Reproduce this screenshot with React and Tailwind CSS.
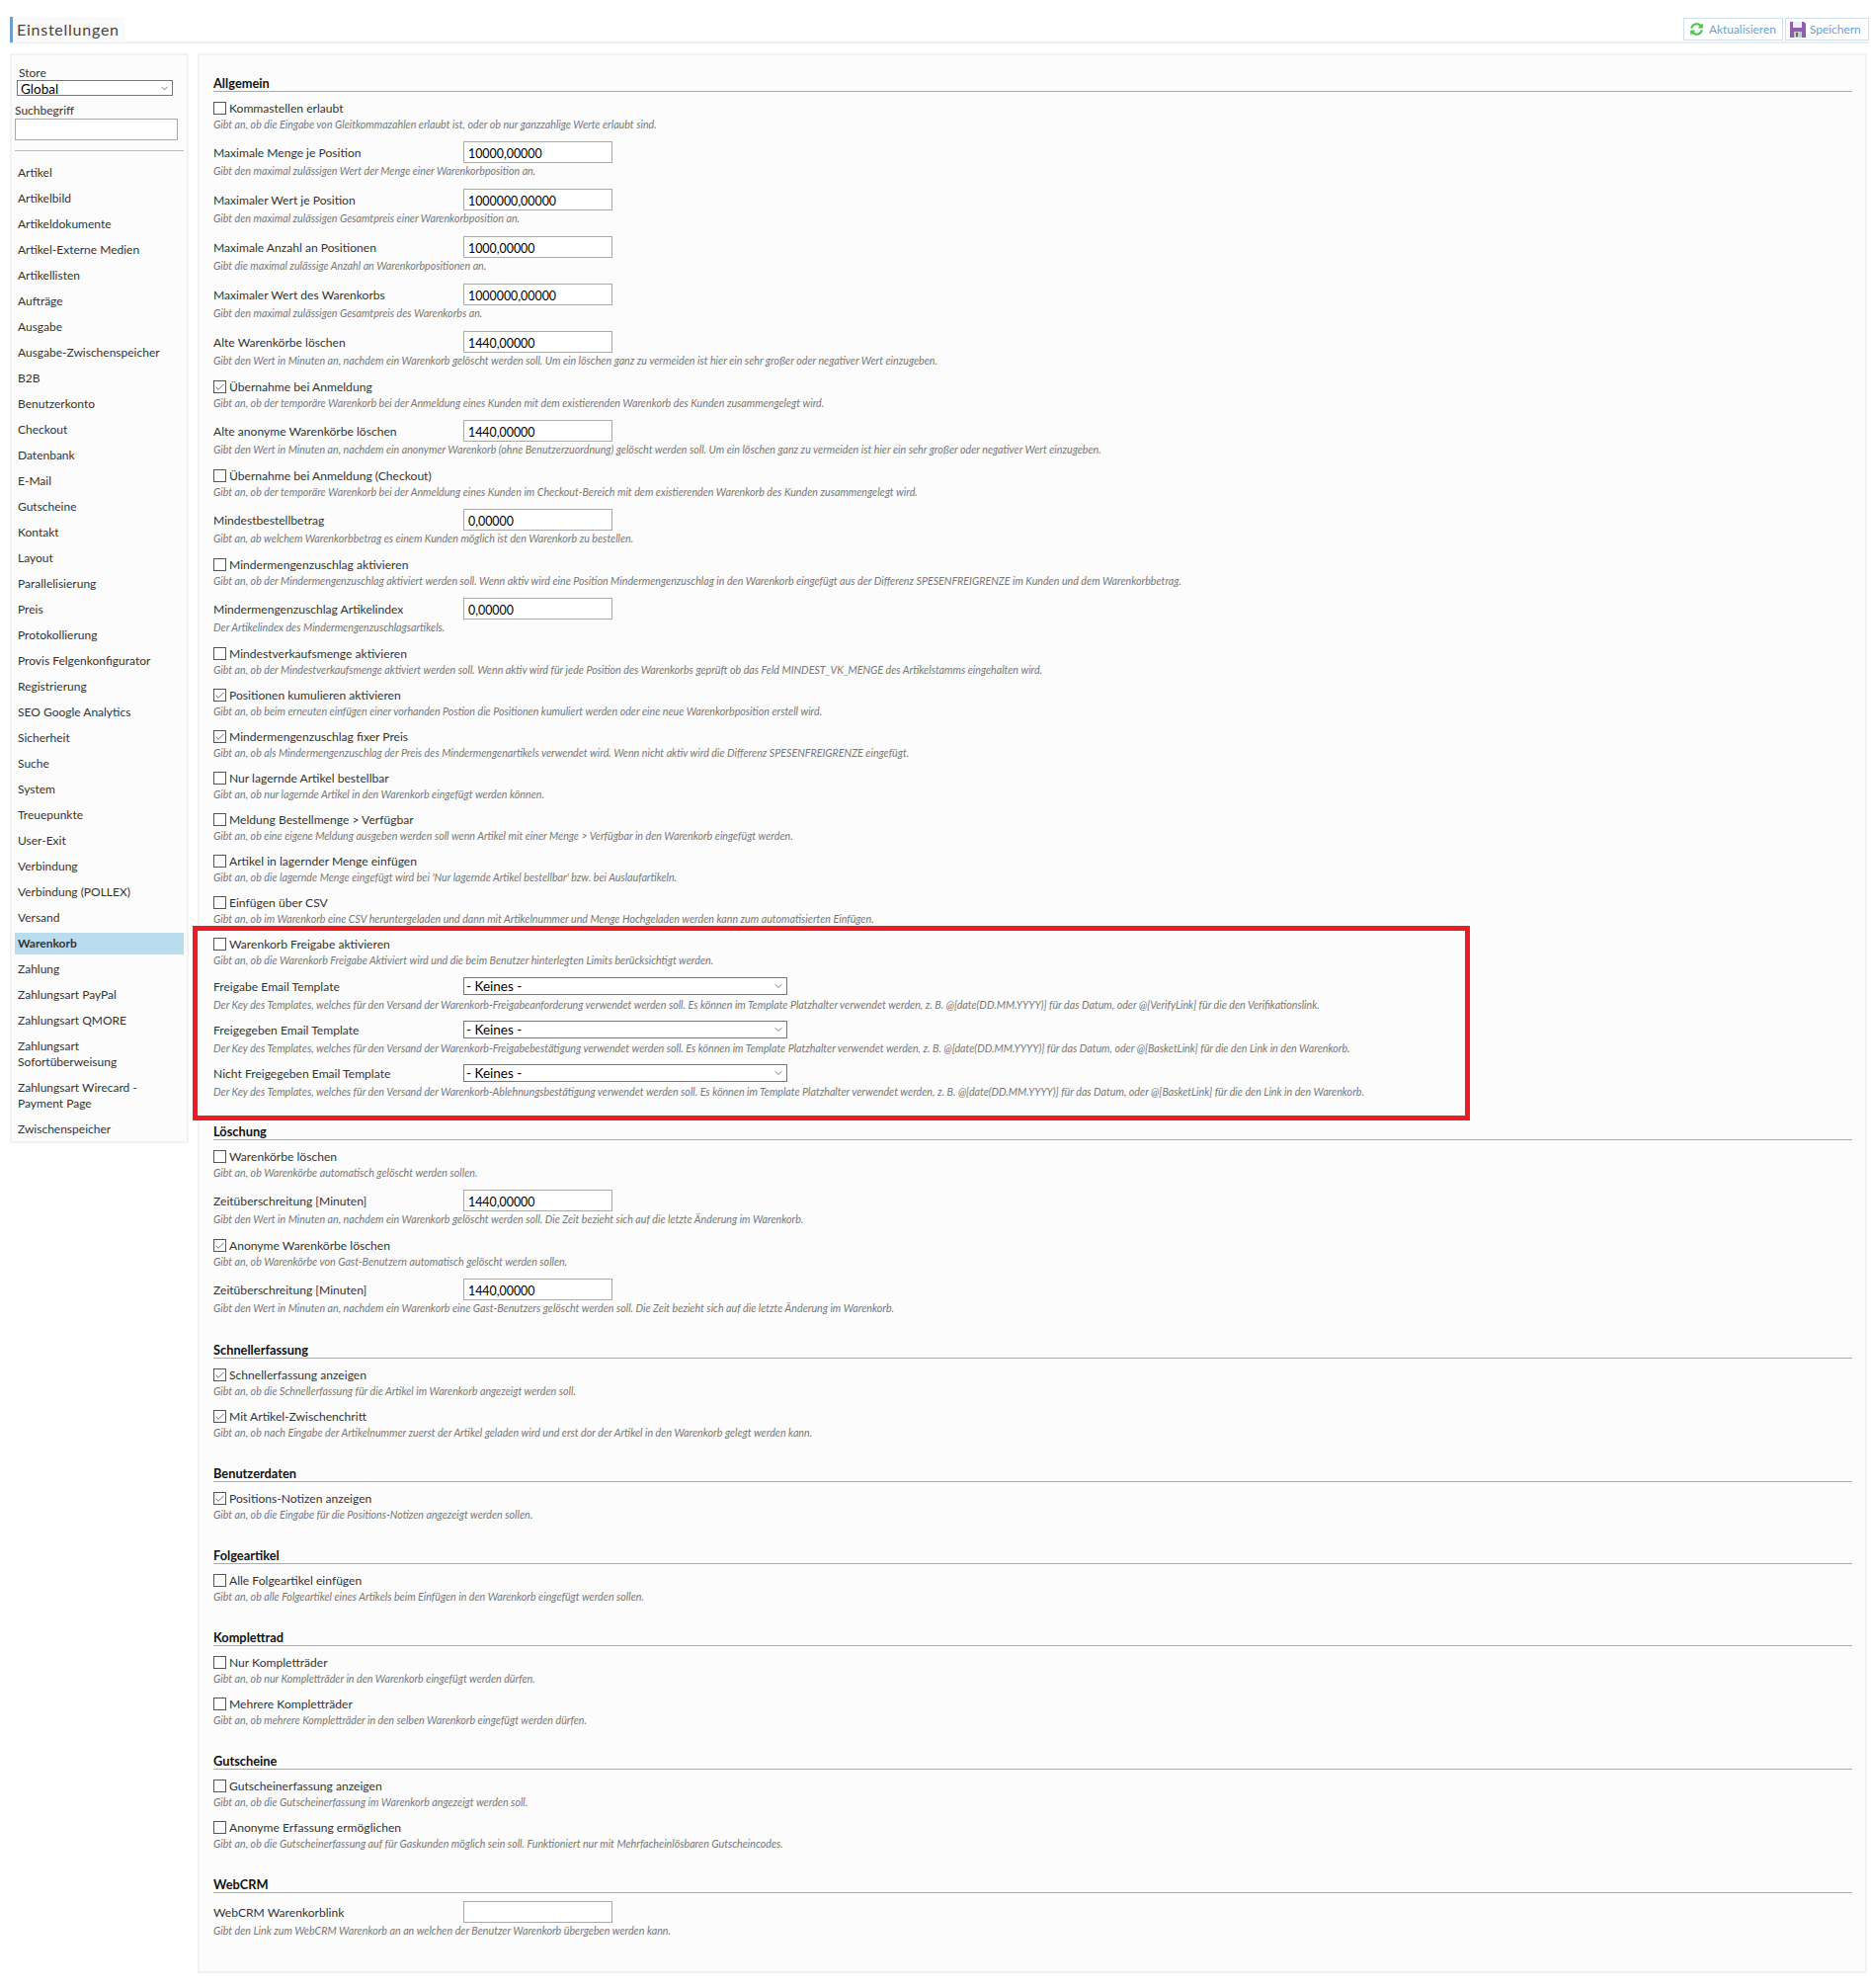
import { Check, ChevronDown } from "lucide-react"
import { FaSyncAlt } from "react-icons/fa"

const navItems = [
  "Artikel", "Artikelbild", "Artikeldokumente", "Artikel-Externe Medien", "Artikellisten", "Aufträge", "Ausgabe",
  "Ausgabe-Zwischenspeicher", "B2B", "Benutzerkonto", "Checkout", "Datenbank", "E-Mail", "Gutscheine", "Kontakt",
  "Layout", "Parallelisierung", "Preis", "Protokollierung", "Provis Felgenkonfigurator", "Registrierung",
  "SEO Google Analytics", "Sicherheit", "Suche", "System", "Treuepunkte", "User-Exit", "Verbindung",
  "Verbindung (POLLEX)", "Versand", "Warenkorb", "Zahlung", "Zahlungsart PayPal", "Zahlungsart QMORE",
  "Zahlungsart Sofortüberweisung", "Zahlungsart Wirecard - Payment Page", "Zwischenspeicher",
]

const allgemein = [
  { type: "check", label: "Kommastellen erlaubt", desc: "Gibt an, ob die Eingabe von Gleitkommazahlen erlaubt ist, oder ob nur ganzzahlige Werte erlaubt sind." },
  { type: "input", label: "Maximale Menge je Position", value: "10000,00000", desc: "Gibt den maximal zulässigen Wert der Menge einer Warenkorbposition an." },
  { type: "input", label: "Maximaler Wert je Position", value: "1000000,00000", desc: "Gibt den maximal zulässigen Gesamtpreis einer Warenkorbposition an." },
  { type: "input", label: "Maximale Anzahl an Positionen", value: "1000,00000", desc: "Gibt die maximal zulässige Anzahl an Warenkorbpositionen an." },
  { type: "input", label: "Maximaler Wert des Warenkorbs", value: "1000000,00000", desc: "Gibt den maximal zulässigen Gesamtpreis des Warenkorbs an." },
  { type: "input", label: "Alte Warenkörbe löschen", value: "1440,00000", desc: "Gibt den Wert in Minuten an, nachdem ein Warenkorb gelöscht werden soll. Um ein löschen ganz zu vermeiden ist hier ein sehr großer oder negativer Wert einzugeben." },
  { type: "check", checked: true, label: "Übernahme bei Anmeldung", desc: "Gibt an, ob der temporäre Warenkorb bei der Anmeldung eines Kunden mit dem existierenden Warenkorb des Kunden zusammengelegt wird." },
  { type: "input", label: "Alte anonyme Warenkörbe löschen", value: "1440,00000", desc: "Gibt den Wert in Minuten an, nachdem ein anonymer Warenkorb (ohne Benutzerzuordnung) gelöscht werden soll. Um ein löschen ganz zu vermeiden ist hier ein sehr großer oder negativer Wert einzugeben." },
  { type: "check", label: "Übernahme bei Anmeldung (Checkout)", desc: "Gibt an, ob der temporäre Warenkorb bei der Anmeldung eines Kunden im Checkout-Bereich mit dem existierenden Warenkorb des Kunden zusammengelegt wird." },
  { type: "input", label: "Mindestbestellbetrag", value: "0,00000", desc: "Gibt an, ab welchem Warenkorbbetrag es einem Kunden möglich ist den Warenkorb zu bestellen." },
  { type: "check", label: "Mindermengenzuschlag aktivieren", desc: "Gibt an, ob der Mindermengenzuschlag aktiviert werden soll. Wenn aktiv wird eine Position Mindermengenzuschlag in den Warenkorb eingefügt aus der Differenz SPESENFREIGRENZE im Kunden und dem Warenkorbbetrag." },
  { type: "input", label: "Mindermengenzuschlag Artikelindex", value: "0,00000", desc: "Der Artikelindex des Mindermengenzuschlagsartikels." },
  { type: "check", label: "Mindestverkaufsmenge aktivieren", desc: "Gibt an, ob der Mindestverkaufsmenge aktiviert werden soll. Wenn aktiv wird für jede Position des Warenkorbs geprüft ob das Feld MINDEST_VK_MENGE des Artikelstamms eingehalten wird." },
  { type: "check", checked: true, label: "Positionen kumulieren aktivieren", desc: "Gibt an, ob beim erneuten einfügen einer vorhanden Postion die Positionen kumuliert werden oder eine neue Warenkorbposition erstell wird." },
  { type: "check", checked: true, label: "Mindermengenzuschlag fixer Preis", desc: "Gibt an, ob als Mindermengenzuschlag der Preis des Mindermengenartikels verwendet wird. Wenn nicht aktiv wird die Differenz SPESENFREIGRENZE eingefügt." },
  { type: "check", label: "Nur lagernde Artikel bestellbar", desc: "Gibt an, ob nur lagernde Artikel in den Warenkorb eingefügt werden können." },
  { type: "check", label: "Meldung Bestellmenge > Verfügbar", desc: "Gibt an, ob eine eigene Meldung ausgeben werden soll wenn Artikel mit einer Menge > Verfügbar in den Warenkorb eingefügt werden." },
  { type: "check", label: "Artikel in lagernder Menge einfügen", desc: "Gibt an, ob die lagernde Menge eingefügt wird bei 'Nur lagernde Artikel bestellbar' bzw. bei Auslaufartikeln." },
  { type: "check", label: "Einfügen über CSV", desc: "Gibt an, ob im Warenkorb eine CSV heruntergeladen und dann mit Artikelnummer und Menge Hochgeladen werden kann zum automatisierten Einfügen." },
]

const freigabe = [
  { type: "check", label: "Warenkorb Freigabe aktivieren", desc: "Gibt an, ob die Warenkorb Freigabe Aktiviert wird und die beim Benutzer hinterlegten Limits berücksichtigt werden." },
  { type: "select", label: "Freigabe Email Template", desc: "Der Key des Templates, welches für den Versand der Warenkorb-Freigabeanforderung verwendet werden soll. Es können im Template Platzhalter verwendet werden, z. B. @[date(DD.MM.YYYY)] für das Datum, oder @[VerifyLink] für die den Verifikationslink." },
  { type: "select", label: "Freigegeben Email Template", desc: "Der Key des Templates, welches für den Versand der Warenkorb-Freigabebestätigung verwendet werden soll. Es können im Template Platzhalter verwendet werden, z. B. @[date(DD.MM.YYYY)] für das Datum, oder @[BasketLink] für die den Link in den Warenkorb." },
  { type: "select", label: "Nicht Freigegeben Email Template", desc: "Der Key des Templates, welches für den Versand der Warenkorb-Ablehnungsbestätigung verwendet werden soll. Es können im Template Platzhalter verwendet werden, z. B. @[date(DD.MM.YYYY)] für das Datum, oder @[BasketLink] für die den Link in den Warenkorb." },
]

const sections = [
  { title: "Löschung", rows: [
    { type: "check", label: "Warenkörbe löschen", desc: "Gibt an, ob Warenkörbe automatisch gelöscht werden sollen." },
    { type: "input", label: "Zeitüberschreitung [Minuten]", value: "1440,00000", desc: "Gibt den Wert in Minuten an, nachdem ein Warenkorb gelöscht werden soll. Die Zeit bezieht sich auf die letzte Änderung im Warenkorb." },
    { type: "check", checked: true, label: "Anonyme Warenkörbe löschen", desc: "Gibt an, ob Warenkörbe von Gast-Benutzern automatisch gelöscht werden sollen." },
    { type: "input", label: "Zeitüberschreitung [Minuten]", value: "1440,00000", desc: "Gibt den Wert in Minuten an, nachdem ein Warenkorb eine Gast-Benutzers gelöscht werden soll. Die Zeit bezieht sich auf die letzte Änderung im Warenkorb." },
  ] },
  { title: "Schnellerfassung", rows: [
    { type: "check", checked: true, label: "Schnellerfassung anzeigen", desc: "Gibt an, ob die Schnellerfassung für die Artikel im Warenkorb angezeigt werden soll." },
    { type: "check", checked: true, label: "Mit Artikel-Zwischenchritt", desc: "Gibt an, ob nach Eingabe der Artikelnummer zuerst der Artikel geladen wird und erst dor der Artikel in den Warenkorb gelegt werden kann." },
  ] },
  { title: "Benutzerdaten", rows: [
    { type: "check", checked: true, label: "Positions-Notizen anzeigen", desc: "Gibt an, ob die Eingabe für die Positions-Notizen angezeigt werden sollen." },
  ] },
  { title: "Folgeartikel", rows: [
    { type: "check", label: "Alle Folgeartikel einfügen", desc: "Gibt an, ob alle Folgeartikel eines Artikels beim Einfügen in den Warenkorb eingefügt werden sollen." },
  ] },
  { title: "Komplettrad", rows: [
    { type: "check", label: "Nur Kompletträder", desc: "Gibt an, ob nur Kompletträder in den Warenkorb eingefügt werden dürfen." },
    { type: "check", label: "Mehrere Kompletträder", desc: "Gibt an, ob mehrere Kompletträder in den selben Warenkorb eingefügt werden dürfen." },
  ] },
  { title: "Gutscheine", rows: [
    { type: "check", label: "Gutscheinerfassung anzeigen", desc: "Gibt an, ob die Gutscheinerfassung im Warenkorb angezeigt werden soll." },
    { type: "check", label: "Anonyme Erfassung ermöglichen", desc: "Gibt an, ob die Gutscheinerfassung auf für Gaskunden möglich sein soll. Funktioniert nur mit Mehrfacheinlösbaren Gutscheincodes." },
  ] },
  { title: "WebCRM", rows: [
    { type: "input", label: "WebCRM Warenkorblink", value: "", desc: "Gibt den Link zum WebCRM Warenkorb an an welchen der Benutzer Warenkorb übergeben werden kann." },
  ] },
]

const Desc = ({ children, className = "" }) => (
  <p className={`text-[10.7px] italic text-[#777] whitespace-nowrap ${className}`}>{children}</p>
)

const Row = ({ row }) => {
  if (row.type === "check") {
    return (
      <div className="pb-[10px]">
        <label className="flex h-[17px] items-center gap-[3px] leading-[17px]">
          <span className="flex h-[13px] w-[13px] items-center justify-center border border-[#555] bg-white">
            {row.checked && <Check className="h-[12px] w-[12px] text-[#444]" strokeWidth={1.75} />}
          </span>
          {row.label}
        </label>
        <Desc className="h-[15px] leading-[15px]">{row.desc}</Desc>
      </div>
    )
  }
  if (row.type === "select") {
    return (
      <div className="pb-[8px]">
        <div className="flex h-[18px] items-center">
          <span className="w-[253px] pt-[2px]">{row.label}</span>
          <div className="relative">
            <select className="block h-[18px] w-[328px] appearance-none border border-[#777] bg-white pl-[2px] pt-[2px] text-[13.5px] leading-none text-black">
              <option>- Keines -</option>
            </select>
            <ChevronDown className="pointer-events-none absolute right-[3px] top-[3px] h-[12px] w-[12px] text-[#444]" strokeWidth={1.5} />
          </div>
        </div>
        <Desc className="h-[18px] leading-[20px]">{row.desc}</Desc>
      </div>
    )
  }
  return (
    <div className="pb-[10px]">
      <div className="flex h-[22px] items-center">
        <span className="w-[253px] pt-[2px]">{row.label}</span>
        <input
          readOnly
          value={row.value}
          className="h-[22px] w-[151px] border border-[#a9a9a9] bg-white px-[4px] pt-[2px] text-[12.4px] text-black"
        />
      </div>
      <Desc className="h-[16px] leading-[16px]">{row.desc}</Desc>
    </div>
  )
}

const Heading = ({ children }) => (
  <h2 className="mb-[8px] h-[17px] border-b border-[#aaa] text-[12.8px] font-bold leading-[17px] text-[#111]">
    {children}
  </h2>
)

const Floppy = () => (
  <svg viewBox="0 0 16 16" className="h-[16px] w-[16px]">
    <path d="M0 0h14l2 2v14H0z" fill="#8e5fb0" />
    <path d="M3 0h9v6H3z" fill="#f2eef6" />
    <path d="M4 10h8v6H4z" fill="#c9c9c9" />
    <path d="M6 11h2v4H6z" fill="#666" />
  </svg>
)

export default function App() {
  return (
    <div className="min-h-[2012px] bg-white pl-[10px] pr-[2px] pt-[17px] font-['Lato','Liberation_Sans',sans-serif] text-[12.1px] text-[#333]">
      {/* Kopfzeile */}
      <header className="flex h-[27px] items-start justify-between border-b-2 border-[#eee]">
        <h1 className="flex h-[26px] w-[117px] items-center border-l-[3px] border-[#6a9fd0] bg-[#fafafa] pl-[4px] text-[16px] tracking-[0.75px] text-[#444]">
          Einstellungen
        </h1>
        <div className="flex gap-[2px] pt-[1px] text-[11.9px] text-[#6a9fd4]">
          <button className="flex h-[23px] w-[101px] items-center gap-[6px] border border-[#cfe0f0] pl-[6px]">
            <FaSyncAlt className="h-[13px] w-[13px] text-[#4fc24f]" />
            Aktualisieren
          </button>
          <button className="flex h-[23px] w-[85px] items-center gap-[4px] border border-[#cfe0f0] pl-[4px]">
            <Floppy />
            Speichern
          </button>
        </div>
      </header>

      <div className="mt-[10px] flex items-start gap-[9px] pr-[2px]">
        {/* Sidebar */}
        <aside className="w-[181px] shrink-0 border-2 border-[#f2f2f2] bg-[#fcfcfc] px-[3px] pb-[1px] pt-[11px] text-[12px]">
          <div className="pl-[4px] leading-[14px]">Store</div>
          <div className="relative ml-[2px] w-[158px]">
            <select className="block h-[16px] w-full appearance-none border border-[#777] bg-white pl-[3px] pt-[2px] text-[13.5px] leading-none text-black">
              <option>Global</option>
            </select>
            <ChevronDown className="pointer-events-none absolute right-[3px] top-[3px] h-[11px] w-[11px] text-[#444]" strokeWidth={1.5} />
          </div>
          <div className="mt-[7px] leading-[16px]">Suchbegriff</div>
          <input className="block h-[22px] w-[165px] border border-[#a9a9a9] bg-white" />
          <div className="mb-[11px] mt-[10px] w-[171px] border-b border-[#bbb]" />
          <nav className="flex w-[171px] flex-col gap-[4px]">
            {navItems.map((item) => (
              <a
                key={item}
                className={`px-[3px] py-[3px] leading-[16px] ${item === "Warenkorb" ? "bg-[#b9dcef] font-bold" : ""}`}
              >
                {item}
              </a>
            ))}
          </nav>
        </aside>

        {/* Inhalt */}
        <main className="h-[1943px] flex-1 border-2 border-[#f2f2f2] bg-[#fcfcfc] pl-[14px] pr-[13px] pt-[20px]">
          <Heading>Allgemein</Heading>
          {allgemein.map((row) => (
            <Row key={row.label} row={row} />
          ))}
          <div className="relative">
            <div className="pointer-events-none absolute -bottom-[13px] -top-[10px] -left-[21px] w-[1293px] border-[5px] border-[#ed1c24]" />
            {freigabe.map((row) => (
              <Row key={row.label} row={row} />
            ))}
          </div>
          {sections.map((section) => (
            <section key={section.title} className="mt-[16px]">
              <Heading>{section.title}</Heading>
              {section.rows.map((row) => (
                <Row key={row.label + row.desc} row={row} />
              ))}
            </section>
          ))}
        </main>
      </div>
    </div>
  )
}
